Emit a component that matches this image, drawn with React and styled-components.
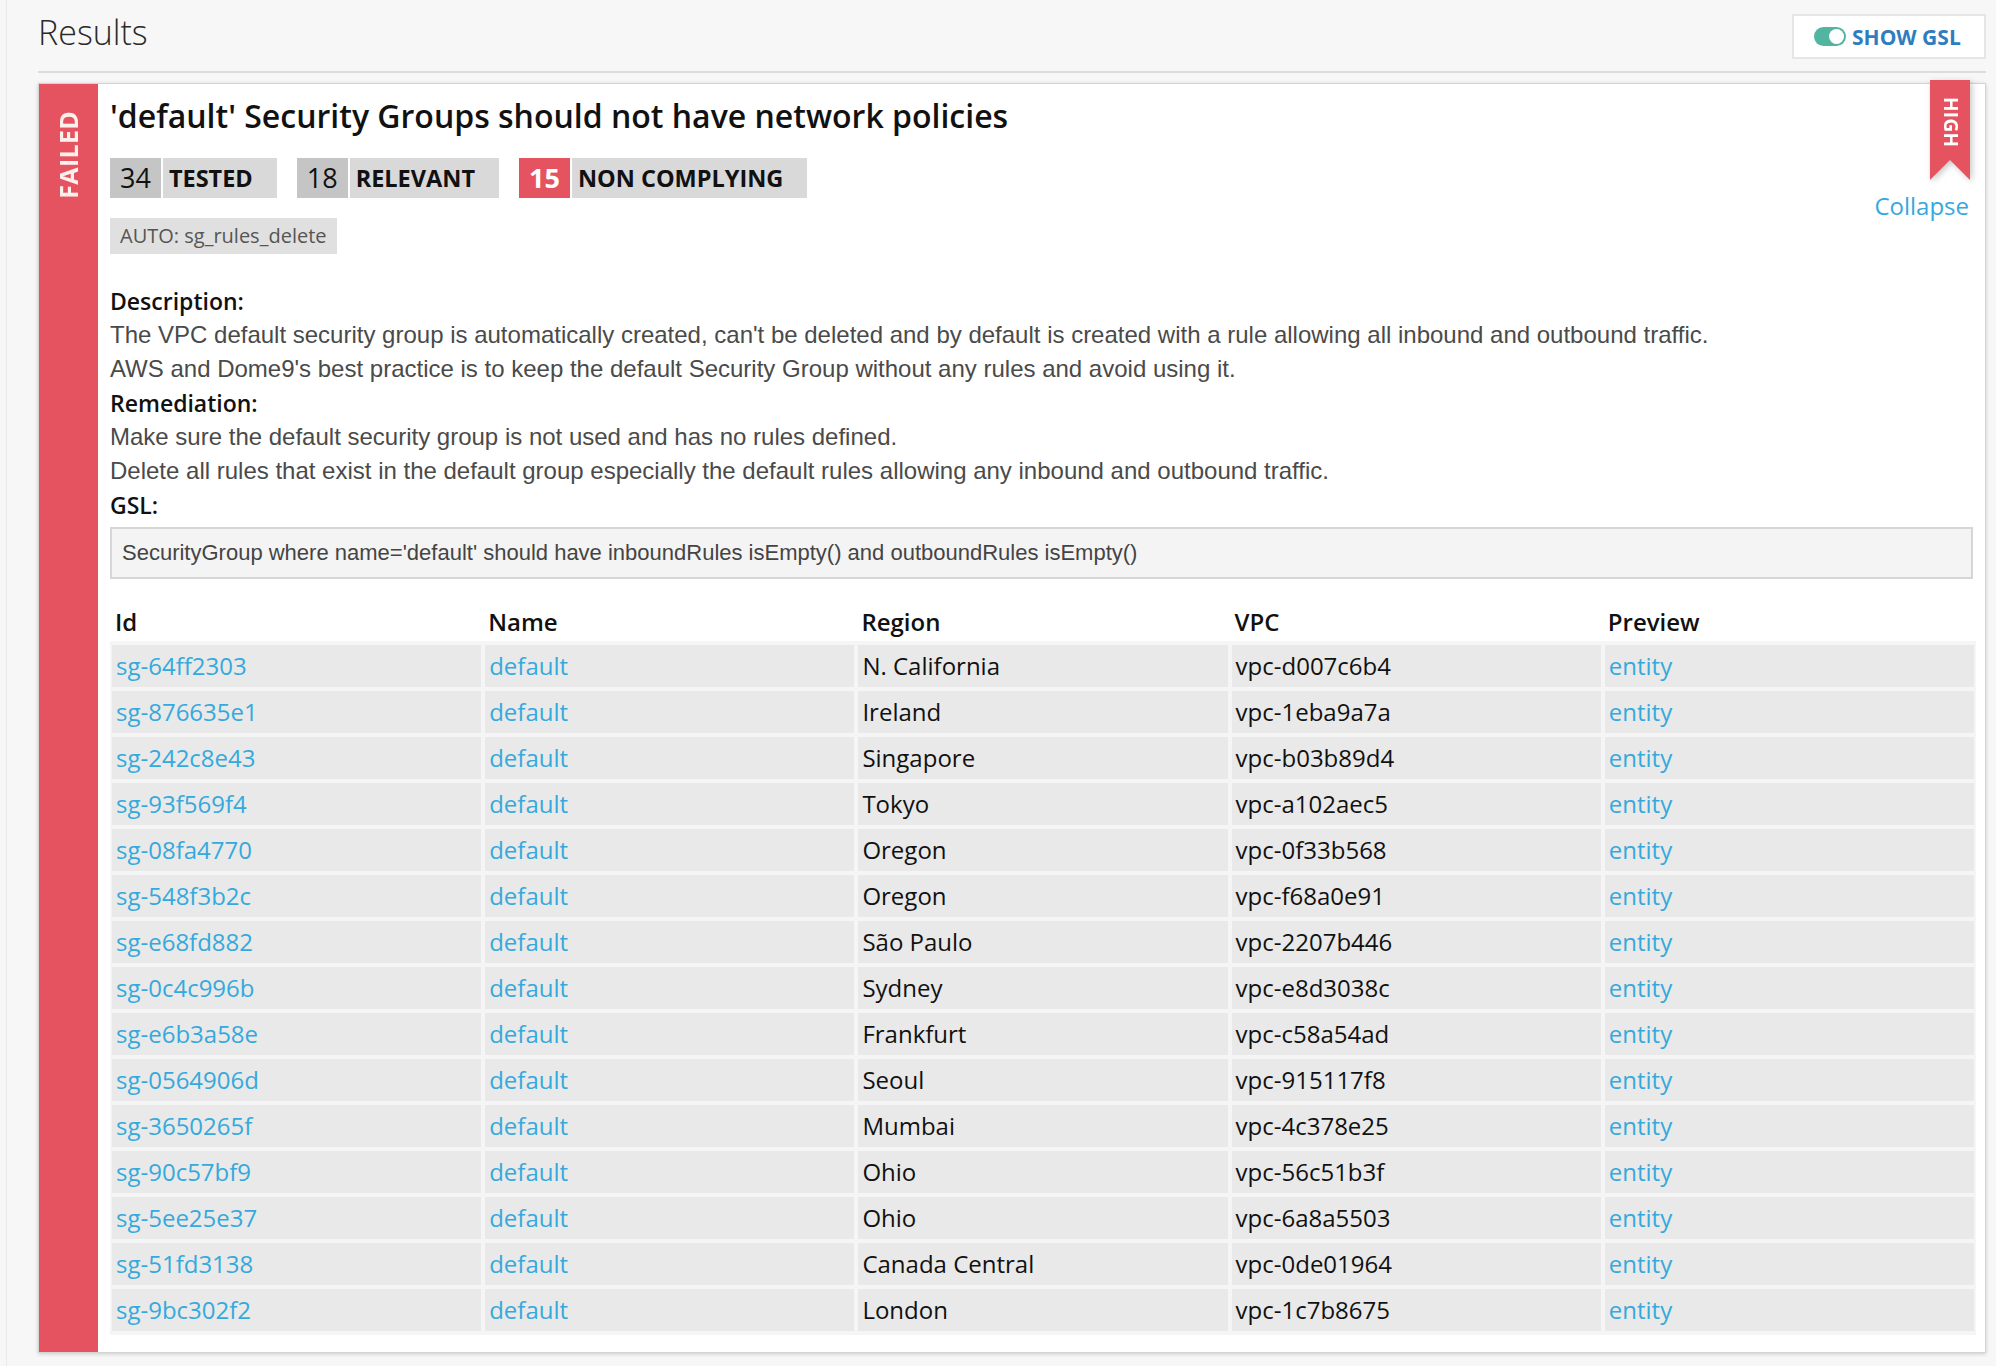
import React from 'react';
import styled, { createGlobalStyle } from 'styled-components';

const GlobalStyle = createGlobalStyle`
  html, body { margin: 0; padding: 0; background: #f7f7f7; }
  body { font-family: 'Open Sans', 'Liberation Sans', sans-serif; color: #111; }
  * { box-sizing: border-box; }
`;

const Page = styled.div`
  margin-left: 6px;
  border-left: 1px solid #e9e9e9;
  padding: 0 10px 12px 31px;
  min-height: 1366px;
`;

const Header = styled.header`
  display: flex;
  justify-content: space-between;
  align-items: flex-start;
  height: 73px;
  border-bottom: 2px solid #dcdcdc;
`;

const PageTitle = styled.h1`
  margin: 10px 0 0;
  font-weight: 300;
  font-size: 34px;
  line-height: 44px;
  color: #2a2a2a;
`;

const GslButton = styled.button`
  margin-top: 14px;
  width: 194px;
  height: 45px;
  border: 2px solid #e6e6e6;
  background: #fff;
  display: flex;
  align-items: center;
  gap: 6px;
  padding: 0 0 0 20px;
  font-family: 'Open Sans', sans-serif;
  font-weight: 700;
  font-size: 21px;
  color: #2f7dc0;
  cursor: pointer;
`;

const Toggle = styled.span`
  position: relative;
  width: 32px;
  height: 19px;
  border-radius: 10px;
  background: #52b59f;
  flex: none;
  &::after {
    content: '';
    position: absolute;
    right: 2px;
    top: 2px;
    width: 15px;
    height: 15px;
    border-radius: 50%;
    background: #fff;
  }
`;

const Card = styled.section`
  position: relative;
  margin-top: 10px;
  display: flex;
  background: #fff;
  border: 1px solid #d4d4d4;
  box-shadow: 0 1px 4px rgba(0, 0, 0, 0.18);
`;

const StatusBar = styled.div`
  width: 59px;
  flex: none;
  background: #e4535f;
  display: flex;
  justify-content: center;
  align-items: flex-start;
  padding-top: 27px;
`;

const VerticalText = styled.span`
  writing-mode: vertical-rl;
  transform: rotate(${(p) => (p.$flip ? '180deg' : '0deg')});
  font-weight: 700;
  font-size: ${(p) => p.$size}px;
  line-height: 1;
  color: ${(p) => p.$color || '#fff'};
  letter-spacing: 0.3px;
`;

const RibbonWrap = styled.div`
  position: absolute;
  top: -4px;
  right: 15px;
  filter: drop-shadow(2px 2px 3px rgba(0, 0, 0, 0.22));
`;

const Ribbon = styled.div`
  width: 40px;
  height: 100px;
  background: #e4535f;
  clip-path: polygon(0 0, 100% 0, 100% 100%, 50% 80%, 0 100%);
  display: flex;
  justify-content: center;
  padding-top: 17px;
`;

const Content = styled.div`
  flex: 1;
  min-width: 0;
  padding: 12px 9px 17px 12px;
`;

const TopRow = styled.div`
  display: flex;
  justify-content: space-between;
  align-items: flex-start;
`;

const TopMain = styled.div`
  display: flex;
  flex-direction: column;
  align-items: flex-start;
`;

const RuleTitle = styled.h2`
  margin: 0;
  font-weight: 600;
  font-size: 32px;
  line-height: 40px;
  color: #111;
`;

const Stats = styled.div`
  margin-top: 22px;
  display: flex;
  gap: 20px;
`;

const Stat = styled.div`
  display: flex;
  gap: 2px;
  height: 40px;
`;

const StatNum = styled.span`
  padding: 0 10px;
  background: ${(p) => (p.$alert ? '#e4535f' : '#c5c5c5')};
  color: ${(p) => (p.$alert ? '#fff' : '#111')};
  font-size: 27px;
  font-weight: ${(p) => (p.$alert ? 700 : 400)};
  line-height: 40px;
`;

const StatLabel = styled.span`
  padding: 0 24px 0 6px;
  background: #d9d9d9;
  font-size: 23.5px;
  font-weight: 700;
  line-height: 40px;
  color: #111;
`;

const AutoTag = styled.span`
  margin-top: 20px;
  height: 36px;
  padding: 0 10px;
  background: #e0e0e0;
  color: #555;
  font-size: 20px;
  line-height: 36px;
`;

const CollapseLink = styled.a`
  margin: 94px 7px 0 0;
  font-size: 24px;
  line-height: 32px;
  color: #35a9dd;
  text-decoration: none;
  cursor: pointer;
`;

const Details = styled.div`
  margin-top: 30px;
`;

const Label = styled.div`
  font-weight: 600;
  font-size: 23px;
  line-height: 34px;
  color: #111;
`;

const Para = styled.div`
  font-family: 'Liberation Sans', Arial, sans-serif;
  font-size: 24px;
  line-height: 34px;
  color: #4a4a4a;
`;

const GslBox = styled.div`
  margin: 5px 3px 0 0;
  height: 52px;
  border: 2px solid #d6d6d6;
  background: #f4f4f4;
  padding: 0 10px;
  font-family: 'Liberation Sans', Arial, sans-serif;
  font-size: 22px;
  line-height: 48px;
  color: #444;
`;

const Grid = styled.div`
  display: grid;
  grid-template-columns: repeat(5, minmax(0, 1fr));
  column-gap: 4px;
`;

const HeadRow = styled(Grid)`
  margin-top: 22px;
  height: 40px;
  padding: 0 2px;
  align-items: center;
`;

const HeadCell = styled.div`
  padding: 0 3px;
  font-weight: 600;
  font-size: 24px;
  color: #111;
`;

const Body = styled(Grid)`
  background: #f5f5f5;
  padding: 4px 2px;
  row-gap: 4px;
`;

const Cell = styled.div`
  height: 42px;
  background: #e9e9e9;
  padding: 0 4px;
  font-size: 24px;
  line-height: 42px;
  white-space: nowrap;
  overflow: hidden;
  color: ${(p) => (p.$link ? '#35a9dd' : '#111')};
`;

const rows = [
  ['sg-64ff2303', 'N. California', 'vpc-d007c6b4'],
  ['sg-876635e1', 'Ireland', 'vpc-1eba9a7a'],
  ['sg-242c8e43', 'Singapore', 'vpc-b03b89d4'],
  ['sg-93f569f4', 'Tokyo', 'vpc-a102aec5'],
  ['sg-08fa4770', 'Oregon', 'vpc-0f33b568'],
  ['sg-548f3b2c', 'Oregon', 'vpc-f68a0e91'],
  ['sg-e68fd882', 'São Paulo', 'vpc-2207b446'],
  ['sg-0c4c996b', 'Sydney', 'vpc-e8d3038c'],
  ['sg-e6b3a58e', 'Frankfurt', 'vpc-c58a54ad'],
  ['sg-0564906d', 'Seoul', 'vpc-915117f8'],
  ['sg-3650265f', 'Mumbai', 'vpc-4c378e25'],
  ['sg-90c57bf9', 'Ohio', 'vpc-56c51b3f'],
  ['sg-5ee25e37', 'Ohio', 'vpc-6a8a5503'],
  ['sg-51fd3138', 'Canada Central', 'vpc-0de01964'],
  ['sg-9bc302f2', 'London', 'vpc-1c7b8675'],
];

export default function App() {
  return (
    <>
      <GlobalStyle />
      <Page>
        <Header>
          <PageTitle>Results</PageTitle>
          <GslButton>
            <Toggle />
            SHOW GSL
          </GslButton>
        </Header>
        <Card>
          <StatusBar>
            <VerticalText $flip $size={25} $color="#fdf0ec">FAILED</VerticalText>
          </StatusBar>
          <RibbonWrap>
            <Ribbon>
              <VerticalText $size={19}>HIGH</VerticalText>
            </Ribbon>
          </RibbonWrap>
          <Content>
            <TopRow>
              <TopMain>
                <RuleTitle>'default' Security Groups should not have network policies</RuleTitle>
                <Stats>
                  <Stat>
                    <StatNum>34</StatNum>
                    <StatLabel>TESTED</StatLabel>
                  </Stat>
                  <Stat>
                    <StatNum>18</StatNum>
                    <StatLabel>RELEVANT</StatLabel>
                  </Stat>
                  <Stat>
                    <StatNum $alert>15</StatNum>
                    <StatLabel>NON COMPLYING</StatLabel>
                  </Stat>
                </Stats>
                <AutoTag>AUTO: sg_rules_delete</AutoTag>
              </TopMain>
              <CollapseLink>Collapse</CollapseLink>
            </TopRow>
            <Details>
              <Label>Description:</Label>
              <Para>The VPC default security group is automatically created, can't be deleted and by default is created with a rule allowing all inbound and outbound traffic.</Para>
              <Para>AWS and Dome9's best practice is to keep the default Security Group without any rules and avoid using it.</Para>
              <Label>Remediation:</Label>
              <Para>Make sure the default security group is not used and has no rules defined.</Para>
              <Para>Delete all rules that exist in the default group especially the default rules allowing any inbound and outbound traffic.</Para>
              <Label>GSL:</Label>
            </Details>
            <GslBox>SecurityGroup where name='default' should have inboundRules isEmpty() and outboundRules isEmpty()</GslBox>
            <HeadRow>
              <HeadCell>Id</HeadCell>
              <HeadCell>Name</HeadCell>
              <HeadCell>Region</HeadCell>
              <HeadCell>VPC</HeadCell>
              <HeadCell>Preview</HeadCell>
            </HeadRow>
            <Body>
              {rows.map(([id, region, vpc]) => (
                <React.Fragment key={id}>
                  <Cell $link>{id}</Cell>
                  <Cell $link>default</Cell>
                  <Cell>{region}</Cell>
                  <Cell>{vpc}</Cell>
                  <Cell $link>entity</Cell>
                </React.Fragment>
              ))}
            </Body>
          </Content>
        </Card>
      </Page>
    </>
  );
}
